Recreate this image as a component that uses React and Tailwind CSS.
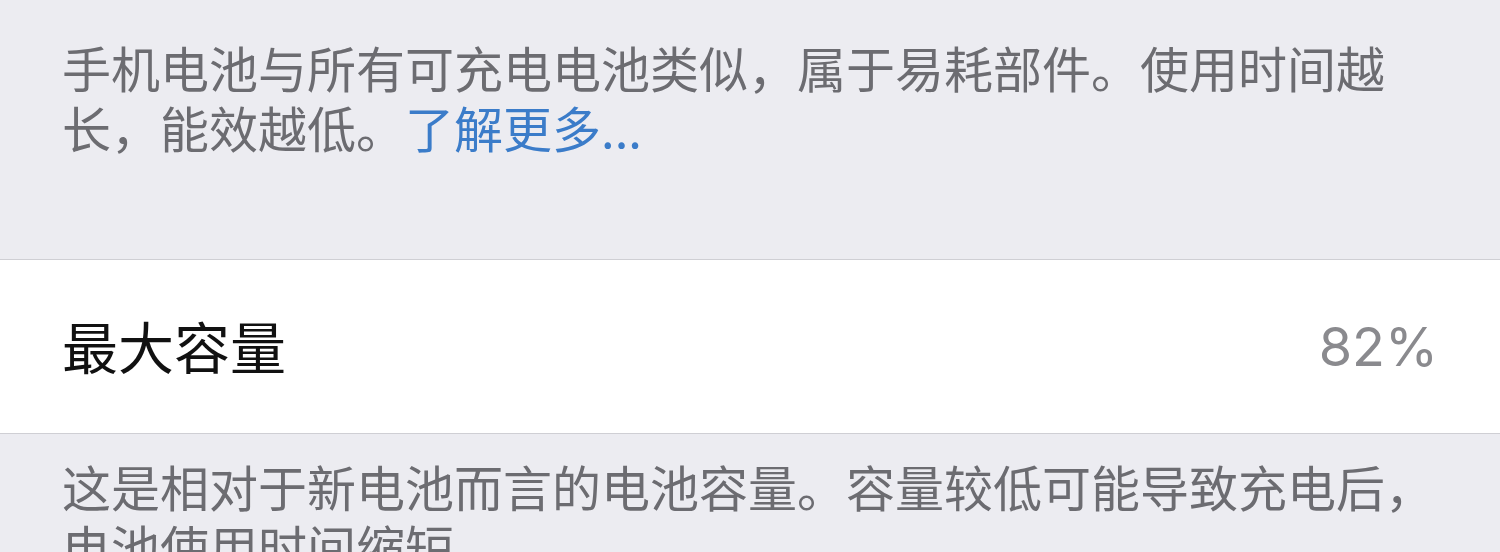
export default function App() {
  return (
    <div
      className="w-[1500px] h-[552px] overflow-hidden bg-[#ececf1]"
      style={{ fontFamily: '"Noto Sans CJK SC", "Noto Sans", sans-serif' }}
    >
      <div className="px-[62px] pt-[37px] h-[259px] text-[49px] leading-[60px] text-[#6c6c71]">
        <div className="whitespace-nowrap">手机电池与所有可充电电池类似，属于易耗部件。使用时间越</div>
        <div className="whitespace-nowrap">
          长，能效越低。<span className="text-[#3b7cc9]">了解更多...</span>
        </div>
      </div>

      <div className="flex items-center justify-between h-[175px] bg-white border-y border-[#cfcfd4] pl-[62px] pr-[62px]">
        <span className="text-[56px] leading-none -mt-[4px] text-[#111111]">最大容量</span>
        <span className="text-[54px] leading-none font-normal text-[#8a8a8e] font-['Inter',sans-serif]">82%</span>
      </div>

      <div className="px-[62px] pt-[22px] text-[49px] leading-[60px] text-[#6c6c71]">
        <div className="whitespace-nowrap">这是相对于新电池而言的电池容量。容量较低可能导致充电后，</div>
        <div className="whitespace-nowrap">电池使用时间缩短</div>
      </div>
    </div>
  );
}
